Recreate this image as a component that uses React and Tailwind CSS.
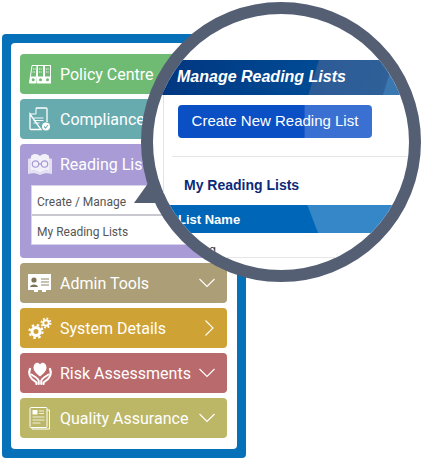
const font = { fontFamily: '"Roboto", sans-serif' }

function ChevronDownThin() {
  return (
    <svg width="16" height="10" viewBox="0 0 16 10" fill="none" stroke="#fff" strokeWidth="1.1">
      <path d="M0.500 1 L8 8.500 L15.500 1" />
    </svg>
  )
}

function ChevronRightThin() {
  return (
    <svg width="16" height="16" viewBox="0 0 16 16" fill="none" stroke="#fff" strokeWidth="1.1">
      <path d="M6.500 0.500 L14 8 L6.500 15.500" />
    </svg>
  )
}

function BindersIcon() {
  return (
    <svg width="24" height="20" viewBox="0 0 24 20" fill="none" stroke="#fff" strokeWidth="1">
      <path d="M1.500 19 L4 1.500 H9 L8 19 Z" />
      <rect x="9.500" y="1.500" width="6" height="17.500" />
      <rect x="16.500" y="1.500" width="6" height="17.500" />
      <path d="M5 5h3M4.500 8h3M11 5h3M11 8h3M18 5h3M18 8h3" strokeDasharray="1 0.600" />
      <path d="M1.500 19 L2.300 12.500 H8.300 L8 19 Z M9.500 12.500 H15.500 V19 H9.500 Z M16.500 12.500 H22.500 V19 H16.500 Z" fill="#fff" stroke="none" />
      <circle cx="5.200" cy="15.700" r="1.500" fill="#6fbb73" stroke="none" />
      <circle cx="12.500" cy="15.700" r="1.500" fill="#6fbb73" stroke="none" />
      <circle cx="19.500" cy="15.700" r="1.500" fill="#6fbb73" stroke="none" />
    </svg>
  )
}

function DocCheckIcon() {
  return (
    <svg width="24" height="24" viewBox="0 0 24 24" fill="none" stroke="#fff" strokeWidth="1.300">
      <path d="M8 1 H18 Q19 1 19 2 V15 M13 22.500 H3 Q2 22.500 2 21.500 V7 Z" />
      <path d="M8 1 V7 H2" strokeWidth="1" />
      <path d="M5.500 11h10M5.500 13.500h10M5.500 16h6" strokeWidth="0.900" />
      <circle cx="18" cy="19.500" r="4" fill="#fff" stroke="none" />
      <path d="M16 19.500l1.500 1.500 2.500-3" stroke="#68abaf" strokeWidth="1.100" />
    </svg>
  )
}

function BookIcon() {
  return (
    <svg width="24" height="22" viewBox="0 0 24 22" fill="none">
      <path d="M0 6 L3 5 V18 C6 17 10 18 12 20 C14 18 18 17 21 18 V5 L24 6 V21 C20 20 16 20 12 22 C8 20 4 20 0 21 Z" fill="#fff" opacity="0.7" />
      <path d="M3 3 C6 0 10 1 12 3 C14 1 18 0 21 3 V18 C18 17 14 18 12 20 C10 18 6 17 3 18 Z" fill="#fff" opacity="0.85" />
      <circle cx="7.500" cy="11" r="3.200" stroke="#a99bd6" strokeWidth="1.200" />
      <circle cx="16.500" cy="11" r="3.200" stroke="#a99bd6" strokeWidth="1.200" />
      <path d="M10.700 11h2.600" stroke="#a99bd6" strokeWidth="1.200" />
    </svg>
  )
}

function IdCardIcon() {
  return (
    <svg width="24" height="18" viewBox="0 0 24 18">
      <path d="M0 0 H23 V16 H18 V18 H14 V16 H10 V18 H6 V16 H0 Z" fill="#fff" />
      <circle cx="6" cy="6" r="2.600" fill="#7d7359" />
      <path d="M2 13 C2.500 9.500 9.500 9.500 10 13 Z" fill="#7d7359" />
      <path d="M13 5h8M13 8h8M13 11h8" stroke="#8d8468" strokeWidth="1" />
    </svg>
  )
}

function GearsIcon() {
  return (
    <svg width="24" height="22" viewBox="0 0 24 22" fill="none" stroke="#fff">
      <circle cx="8" cy="14.500" r="4" strokeWidth="3" />
      <circle cx="8" cy="14.500" r="6.500" strokeWidth="2.200" strokeDasharray="2.500 2.600" />
      <circle cx="18" cy="6" r="2.800" strokeWidth="2" />
      <circle cx="18" cy="6" r="4.600" strokeWidth="1.800" strokeDasharray="1.800 1.800" />
    </svg>
  )
}

function HandsHeartIcon() {
  return (
    <svg width="24" height="24" viewBox="0 0 24 24" fill="none" stroke="#fff" strokeLinecap="round" strokeLinejoin="round">
      <path d="M12 15.500 C7.500 12 5.500 9.500 5.500 6.500 C5.500 1.500 10.500 0.500 12 3.500 C13.500 0.500 18.500 1.500 18.500 6.500 C18.500 9.500 16.500 12 12 15.500 Z" fill="#fff" stroke="none" />
      <path d="M2 8 C0.500 12 1.500 15.500 4 18 L8.500 21.500 V23" strokeWidth="2.200" />
      <path d="M3.500 13.500 L8 16.500 C9.500 17.500 10.500 18.500 10.800 20 V23" strokeWidth="2" />
      <path d="M22 8 C23.500 12 22.500 15.500 20 18 L15.500 21.500 V23" strokeWidth="2.200" />
      <path d="M20.500 13.500 L16 16.500 C14.500 17.500 13.500 18.500 13.200 20 V23" strokeWidth="2" />
    </svg>
  )
}

function ReportIcon() {
  return (
    <svg width="24" height="23" viewBox="0 0 24 23" fill="none" stroke="#fff" strokeWidth="1">
      <path d="M4 20.500 V22 H21.500 V3 H19" />
      <rect x="2" y="0.500" width="17" height="20" rx="1" />
      <rect x="4.500" y="3" width="5" height="4.500" fill="#fff" stroke="none" />
      <path d="M11 4h5M11 6.500h5M4.500 10h12M4.500 13h12M4.500 16h8" strokeWidth="0.800" />
    </svg>
  )
}

const topItems = [
  { label: 'Policy Centre', icon: <BindersIcon />, bg: 'bg-[#6fbb73]' },
  { label: 'Compliance', icon: <DocCheckIcon />, bg: 'bg-[#68abaf]' },
]

const bottomItems = [
  { label: 'Admin Tools', icon: <IdCardIcon />, bg: 'bg-[#ac9f77]' },
  { label: 'System Details', icon: <GearsIcon />, bg: 'bg-[#cfa235]', right: true },
  { label: 'Risk Assessments', icon: <HandsHeartIcon />, bg: 'bg-[#b96a6c]' },
  { label: 'Quality Assurance', icon: <ReportIcon />, bg: 'bg-[#bcb767]' },
]

function MenuRow({ item }) {
  return (
    <div className={`flex h-10 items-center rounded ${item.bg} pl-2 pr-3 text-white`}>
      <span className="flex w-8 shrink-0 justify-start">{item.icon}</span>
      <span className="pt-[2px] text-[16px] whitespace-nowrap">{item.label}</span>
      <span className="ml-auto">{item.right ? <ChevronRightThin /> : <ChevronDownThin />}</span>
    </div>
  )
}

export default function App() {
  return (
    <div className="relative h-[468px] w-[431px] overflow-hidden bg-white" style={font}>
      <div className="ml-[2px] pt-[34px]">
        <div className="w-[244px] rounded bg-[#0670b8] p-[9px]">
          <div className="flex flex-col gap-[5px] rounded bg-white pt-[11px] pb-[11px] pl-[9px] pr-[10px]">
            {topItems.map((item) => (
              <MenuRow key={item.label} item={item} />
            ))}
            <div className="h-[114px] rounded bg-[#a99bd6] text-white">
              <div className="flex h-10 items-center pl-2">
                <span className="flex w-8 shrink-0 justify-start">
                  <BookIcon />
                </span>
                <span className="pt-[2px] text-[16px]">Reading Lists</span>
              </div>
              <div className="mx-[11px] mt-[1px] border border-[#d8d2ec] bg-white text-[12px] text-[#555]">
                <div className="flex h-[30px] items-center border-b-2 border-[#c9c7cf] px-[5px] pt-[4px]">Create / Manage</div>
                <div className="flex h-[28px] items-center px-[5px] pt-[4px]">My Reading Lists</div>
              </div>
            </div>
            {bottomItems.map((item) => (
              <MenuRow key={item.label} item={item} />
            ))}
          </div>
        </div>
      </div>

      {/* callout tail of the magnifier */}
      <svg className="absolute left-[130px] top-[170px]" width="40" height="40" viewBox="0 0 40 40">
        <path d="M4 33 L24 5 L34 33 Z" fill="#555f74" />
      </svg>

      {/* magnifier lens */}
      <div
        className="absolute left-[141px] top-[2px] h-[280px] w-[280px] overflow-hidden rounded-full border-[12px] border-[#555f74] bg-white"
        style={{ fontFamily: '"Liberation Sans", Arial, sans-serif' }}
      >
        <div className="h-full w-full pt-[46px]">
          <div className="flex h-[35px] items-center bg-[linear-gradient(107deg,#02357f_0%,#004a94_62%,#2d5b96_62.5%,#2f6098_90%,#3a78b2_90.5%,#3a78b2_100%)] pb-[2px] pl-[24px] text-[16px] font-bold italic text-white">
            Manage Reading Lists
          </div>
          <div className="ml-[10px] flex flex-col border-l border-[#e3e3e3] pl-[14px]">
            <button className="mt-[10px] h-[33px] w-[194px] rounded bg-[linear-gradient(90deg,#0a4fc4_0%,#0a4fc4_65%,#3a70d2_65.5%,#3a70d2_100%)] text-center text-[15px] text-white">
              Create New Reading List
            </button>
            <div className="-ml-[6px] mt-[18px] h-[49px] border-t border-[#e6e6e6] pt-[18px] pl-[12px] text-[14px] font-bold text-[#0b2a78]">
              My Reading Lists
            </div>
            <div className="-ml-[14px] flex h-[28px] items-center bg-[linear-gradient(69deg,#0067b8_0%,#0067b8_60%,#3587c8_60.5%,#3587c8_100%)] pl-[14px] pt-[2px] text-[13px] font-bold text-white">
              List Name
            </div>
            <div className="-ml-[14px] h-[25px] border-b border-[#e6e6e6] pl-[14px] pt-[8px] text-[12px] text-[#333]">
              Testing
            </div>
          </div>
        </div>
      </div>
    </div>
  )
}
